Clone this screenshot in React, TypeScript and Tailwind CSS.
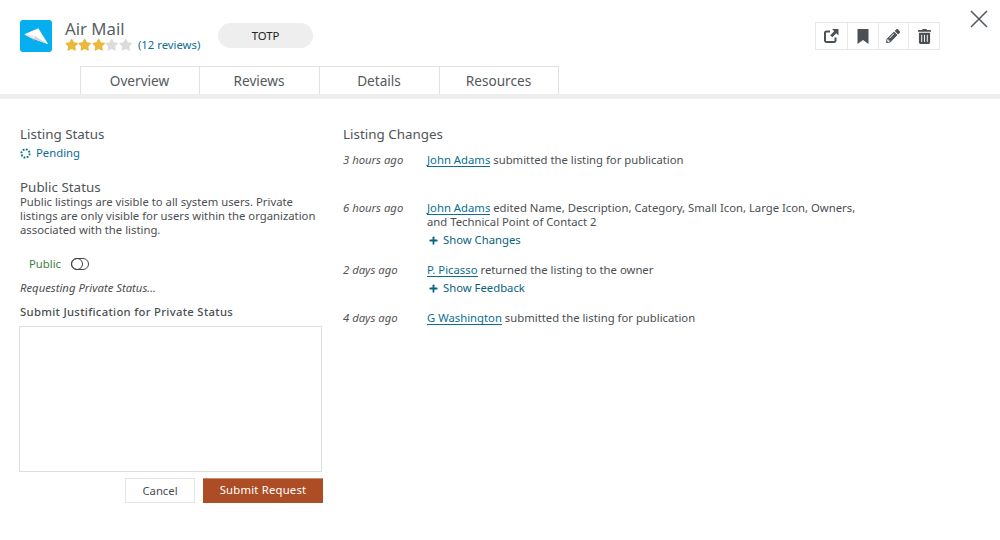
import React from 'react'
import { Plus } from 'lucide-react'
import { FaPencilAlt, FaStar, FaTrashAlt } from 'react-icons/fa'

const TABS = ['Overview', 'Reviews', 'Details', 'Resources']

const ACTIONS = [
  <svg key="launch" viewBox="0 0 16 16" className="w-[16px] h-[16px] -ml-[1px]" fill="none">
    <path d="M7 3.5H3.5a1.5 1.5 0 0 0-1.5 1.5v7.5A1.5 1.5 0 0 0 3.5 14H11a1.5 1.5 0 0 0 1.5-1.5V9.5" stroke="currentColor" strokeWidth="2" />
    <path d="M9 1h6.5v6.5l-2.2-2.2-4 4-2.1-2.1 4-4z" fill="currentColor" />
  </svg>,
  <svg key="bookmark" viewBox="0 0 12 15" className="w-[12px] h-[15px]">
    <path d="M0.5 0h11v15L6 11l-5.5 4z" fill="currentColor" />
  </svg>,
  <FaPencilAlt key="edit" className="w-[14px] h-[14px]" />,
  <FaTrashAlt key="delete" className="w-[13px] h-[15px]" />,
]

function PlaneLogo() {
  return (
    <div className="w-8 h-8 rounded-[3px] bg-[#05aeee]">
      <svg viewBox="0 0 32 32" className="w-8 h-8">
        <path d="M4.3 14.3 L18.3 8.3 L28.3 24.3 L11.7 18.3 Z" fill="#ffffff" />
        <path d="M4.3 14.3 L11.7 18.3 L15 16 Z" fill="#e3e9eb" />
        <path d="M11.7 18.3 L13 21 L16 19.6 Z" fill="#8fa3aa" />
        <path d="M15 16 L28.3 24.3 L13.5 18.9 Z" fill="#cfd8db" />
      </svg>
    </div>
  )
}

function ChangeLink({ children }: { children: React.ReactNode }) {
  return <a className="text-[#0a6f8f] border-b border-[#0a6f8f] leading-[13px] inline-block">{children}</a>
}

function ShowMore({ label }: { label: string }) {
  return (
    <div className="flex items-center gap-[4px] text-[#0a6480] mt-[3px] h-[16px] pl-[1px]">
      <Plus className="w-[11px] h-[11px]" strokeWidth={4} />
      <span>{label}</span>
    </div>
  )
}

function Change({ time, children, className }: { time: string; children: React.ReactNode; className: string }) {
  return (
    <div className={`flex ${className}`}>
      <div className="w-[84px] shrink-0 italic text-[#555]">{time}</div>
      <div className="w-[436px]">{children}</div>
    </div>
  )
}

export default function App() {
  return (
    <div className="w-[1000px] h-[540px] bg-white overflow-hidden relative text-[11.3px] leading-[14px] text-[#4b4f52] font-['Noto_Sans',sans-serif]">
      <svg viewBox="0 0 18 18" className="absolute left-[970px] top-[10px] w-[18px] h-[18px] text-[#555b60]" fill="none" stroke="currentColor" strokeWidth="1.6">
        <path d="M1 1 L17 17 M17 1 L1 17" />
      </svg>

      {/* Header */}
      <header className="h-[66px] flex pl-[20px] pt-[20px]">
        <PlaneLogo />
        <div className="ml-[13px] w-[153px]">
          <div className="text-[16.8px] leading-[18px] text-[#5a6064]">Air Mail</div>
          <div className="flex items-center">
            {[0, 1, 2, 3, 4].map((i) => (
              <FaStar key={i} className={`w-[13.4px] h-[13.4px] ${i < 3 ? 'text-[#e8b93c]' : 'text-[#dcdcdc]'}`} />
            ))}
            <span className="ml-[6px] text-[#0a6f8f]">(12 reviews)</span>
          </div>
        </div>
        <div className="w-[95px] h-[25px] mt-[3px] rounded-full bg-[#eeeeee] flex items-center justify-center text-[#222]">TOTP</div>
        <div className="ml-[502px] mt-[2px] w-[125px] h-[28px] grid grid-cols-4 border border-[#e8e8e8] text-[#4a5054]">
          {ACTIONS.map((icon, i) => (
            <div key={i} className={`flex items-center justify-center ${i > 0 ? 'border-l border-[#e8e8e8]' : ''}`}>
              {icon}
            </div>
          ))}
        </div>
      </header>

      {/* Tabs */}
      <nav className="h-[28px] pl-[80px] flex">
        {TABS.map((t) => (
          <div key={t} className="w-[120px] first:w-[119px] pr-[1px] border-t border-l last:border-r border-[#e2e2e2] flex items-center justify-center text-[13.6px] text-[#55595c]">
            {t}
          </div>
        ))}
      </nav>
      <div className="h-[5px] bg-[#eeeeee]" />

      <main className="flex pl-[20px] pt-[27px]">
        {/* Left column */}
        <section className="w-[323px]">
          <h2 className="text-[13.4px] leading-[16px] text-[#505457]">Listing Status</h2>
          <div className="flex items-center text-[#0a6f8f] mt-[3px] h-[16px]">
            <svg viewBox="0 0 12 12" className="w-[11px] h-[11px]">
              <circle cx="6" cy="6" r="4.5" fill="none" stroke="#0a6f8f" strokeWidth="2" strokeDasharray="2 1.5" />
            </svg>
            <span className="ml-[5px]">Pending</span>
          </div>
          <h2 className="text-[13.4px] leading-[16px] text-[#505457] mt-[18px]">Public Status</h2>
          <p className="w-[300px]">
            Public listings are visible to all system users. Private listings are only visible for users within the organization associated with the listing.
          </p>
          <div className="flex items-center mt-[19px] ml-[9px] h-[16px] text-[#3f7d45]">
            Public
            <div className="ml-[10px] w-[18px] h-[12px] rounded-full border border-[#444] relative">
              <div className="absolute left-[-1px] top-[-1px] w-[12px] h-[12px] rounded-full border border-[#444]" />
            </div>
          </div>
          <div className="italic mt-[9px]">Requesting Private Status...</div>
          <div className="font-medium tracking-[0.3px] mt-[10px]">Submit Justification for Private Status</div>
          <textarea className="block mt-[7px] -ml-[1px] w-[303px] h-[146px] border border-[#dddddd] outline-none resize-none" />
          <div className="flex justify-end mt-[6px] gap-[8px] w-[303px]">
            <button className="w-[70px] h-[25px] border border-[#e4e4e4] text-[#4b4f52] bg-white">Cancel</button>
            <button className="w-[120px] h-[25px] pb-[2px] tracking-[0.2px] bg-[#ac4d26] border-t border-[#c98a70] text-white">Submit Request</button>
          </div>
        </section>

        {/* Right column */}
        <section>
          <h2 className="text-[13.4px] leading-[16px] text-[#505457]">Listing Changes</h2>
          <Change time="3 hours ago" className="mt-[11px]">
            <ChangeLink>John Adams</ChangeLink> submitted the listing for publication
          </Change>
          <Change time="6 hours ago" className="mt-[34px]">
            <ChangeLink>John Adams</ChangeLink> edited Name, Description, Category, Small Icon, Large Icon, Owners, and Technical Point of Contact 2
            <ShowMore label="Show Changes" />
          </Change>
          <Change time="2 days ago" className="mt-[15px]">
            <ChangeLink>P. Picasso</ChangeLink> returned the listing to the owner
            <ShowMore label="Show Feedback" />
          </Change>
          <Change time="4 days ago" className="mt-[15px]">
            <ChangeLink>G Washington</ChangeLink> submitted the listing for publication
          </Change>
        </section>
      </main>
    </div>
  )
}
